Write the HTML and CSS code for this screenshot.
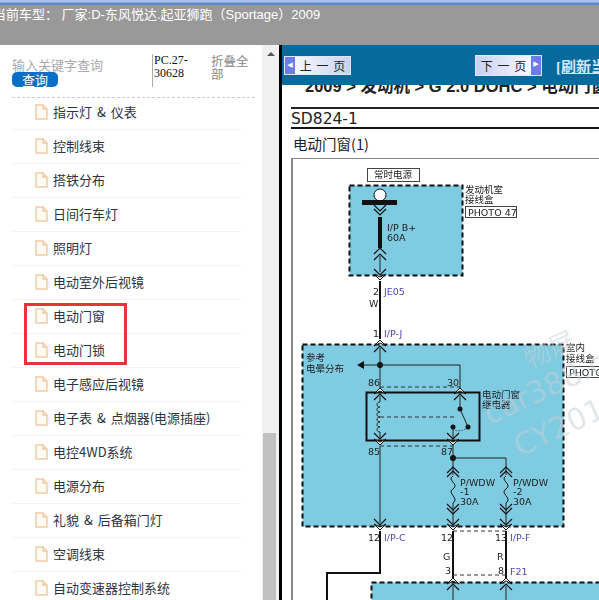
FILE: index.html
```html
<!DOCTYPE html>
<html lang="zh-CN">

<head>
    <meta charset="UTF-8">
    <meta name="viewport" content="width=device-width, initial-scale=1.0">
    <title>电动门窗</title>
    <link rel="stylesheet" href="styles.css">
</head>

<body>
    <svg class="defs">
        <defs>
            <path id="chev-down" d="M-6 -4 L0 2 L6 -4" fill="none" stroke="#111" stroke-width="1.2" />
            <path id="chev-up" d="M-6 4 L0 -2 L6 4" fill="none" stroke="#111" stroke-width="1.2" />
            <path id="plug-down" d="M-6 -4 L0 2 L6 -4 L0 -1 Z" fill="#fff" stroke="#111" stroke-width="1" />
            <path id="plug-up" d="M-6 4 L0 -2 L6 4 L0 1 Z" fill="#fff" stroke="#111" stroke-width="1" />
            <path id="doc" d="M1 1 H8 L12 5 V15 H1 Z M8 1 V5 H12" fill="#fffaf4" stroke="#efcba2" stroke-width="1.4" />
            <path id="fuse" d="M0 0 C-7 4 7 8 0 13 C-7 17 7 22 0 27" fill="none" stroke="#111" stroke-width="1" />
        </defs>
    </svg>

    <header class="top-bar">
        <div class="top-strip"></div>
        <div class="car-info">当前车型： 厂家:D-东风悦达.起亚狮跑（Sportage）2009</div>
    </header>

    <div class="main">
        <aside class="sidebar">
            <div class="search-row">
                <div class="search-col">
                    <div class="search-hint">输入关键字查询</div>
                    <button class="search-btn">查询</button>
                </div>
                <div class="part-no">PC.27-30628</div>
                <div class="collapse-all">折叠全部</div>
            </div>

            <ul class="tree">
                <li><svg class="doc-icon" viewBox="0 0 13 16"><use href="#doc" /></svg>指示灯 &amp; 仪表</li>
                <li><svg class="doc-icon" viewBox="0 0 13 16"><use href="#doc" /></svg>控制线束</li>
                <li><svg class="doc-icon" viewBox="0 0 13 16"><use href="#doc" /></svg>搭铁分布</li>
                <li><svg class="doc-icon" viewBox="0 0 13 16"><use href="#doc" /></svg>日间行车灯</li>
                <li><svg class="doc-icon" viewBox="0 0 13 16"><use href="#doc" /></svg>照明灯</li>
                <li><svg class="doc-icon" viewBox="0 0 13 16"><use href="#doc" /></svg>电动室外后视镜</li>
                <li><svg class="doc-icon" viewBox="0 0 13 16"><use href="#doc" /></svg>电动门窗</li>
                <li><svg class="doc-icon" viewBox="0 0 13 16"><use href="#doc" /></svg>电动门锁</li>
                <li><svg class="doc-icon" viewBox="0 0 13 16"><use href="#doc" /></svg>电子感应后视镜</li>
                <li><svg class="doc-icon" viewBox="0 0 13 16"><use href="#doc" /></svg>电子表 &amp; 点烟器(电源插座)</li>
                <li><svg class="doc-icon" viewBox="0 0 13 16"><use href="#doc" /></svg>电控4WD系统</li>
                <li><svg class="doc-icon" viewBox="0 0 13 16"><use href="#doc" /></svg>电源分布</li>
                <li><svg class="doc-icon" viewBox="0 0 13 16"><use href="#doc" /></svg>礼貌 &amp; 后备箱门灯</li>
                <li><svg class="doc-icon" viewBox="0 0 13 16"><use href="#doc" /></svg>空调线束</li>
                <li><svg class="doc-icon" viewBox="0 0 13 16"><use href="#doc" /></svg>自动变速器控制系统</li>
            </ul>

            <div class="red-mark"></div>
        </aside>

        <div class="scrollbar">
            <div class="scroll-up"></div>
            <div class="scroll-thumb"></div>
        </div>

        <section class="content">
            <div class="nav-band">
                <div class="page-btn page-prev">
                    <span class="page-arrow">◀</span>
                    <span class="page-label">上 一 页</span>
                </div>
                <div class="page-btn page-next">
                    <span class="page-label">下 一 页</span>
                    <span class="page-arrow">▶</span>
                </div>
                <a class="refresh-link">[刷新当前页]</a>
            </div>

            <div class="doc-page">
                <div class="crumbs">2009 &gt; 发动机 &gt; G 2.0 DOHC &gt; 电动门窗</div>
                <div class="doc-code">SD824-1</div>
                <div class="doc-title">电动门窗(1)</div>

                <svg class="diagram" viewBox="293 159 306 441" width="306" height="441">
                    <!-- 接线盒 -->
                    <rect class="box" x="349.5" y="185.5" width="113" height="90" />
                    <rect class="box" x="302.5" y="344.5" width="261" height="182" />
                    <rect class="box" x="371.5" y="582.5" width="240" height="60" />

                    <!-- 常时电源 -->
                    <rect class="tag" x="367.5" y="168.5" width="52" height="13" />
                    <text class="cn" x="393" y="178" text-anchor="middle">常时电源</text>
                    <circle cx="380" cy="195" r="6" fill="#fff" stroke="#111" />
                    <rect x="362" y="200" width="35" height="5" fill="#111" />
                    <use href="#chev-down" x="380" y="209" />
                    <use href="#chev-down" x="380" y="213" />
                    <rect x="378" y="217" width="4" height="31" fill="#111" />
                    <use href="#chev-up" x="380" y="250" />
                    <use href="#chev-up" x="380" y="256" />
                    <line class="wire" x1="380" y1="256" x2="380" y2="272" />
                    <use href="#chev-down" x="380" y="273" />
                    <use href="#plug-down" x="380" y="278" />
                    <text class="lbl" x="387" y="231">I/P B+</text>
                    <text class="lbl" x="387" y="241">60A</text>
                    <text class="cn" x="465" y="193">发动机室</text>
                    <text class="cn" x="465" y="203">接线盒</text>
                    <rect class="tag" x="465.5" y="206.5" width="51" height="11" />
                    <text class="lbl" x="468" y="216">PHOTO 47</text>

                    <line class="wire-thick" x1="380" y1="281" x2="380" y2="339" />
                    <text class="lbl" x="373" y="295">2</text>
                    <text class="code" x="384" y="295">JE05</text>
                    <text class="lbl" x="369" y="307">W</text>
                    <text class="lbl" x="373" y="337">1</text>
                    <text class="code" x="384" y="337">I/P-J</text>
                    <use href="#plug-up" x="380" y="342" />

                    <!-- 继电器 -->
                    <use href="#chev-up" x="380" y="348" />
                    <line class="wire" x1="380" y1="348" x2="380" y2="392" />
                    <circle cx="380" cy="365" r="3" fill="#111" />
                    <path d="M357 365 L364 361 V369 Z" fill="#111" />
                    <path class="wire" d="M364 365 H460 V391" />
                    <text class="cn" x="306" y="361">参考</text>
                    <text class="cn" x="306" y="372">电晕分布</text>
                    <text class="lbl" x="368" y="386">86</text>
                    <text class="lbl" x="447" y="386">30</text>
                    <line class="dash" x1="380" y1="387" x2="460" y2="387" />
                    <rect x="366.5" y="392.5" width="113" height="48" fill="none" stroke="#111" stroke-width="2" />
                    <use href="#plug-up" x="380" y="390" />
                    <use href="#plug-up" x="460" y="390" />
                    <use href="#chev-up" x="380" y="396" />
                    <use href="#chev-up" x="460" y="396" />
                    <path class="wire" d="M460 396 V409 L468 427" />
                    <circle cx="460" cy="409" r="2.5" fill="#111" />
                    <circle cx="468" cy="427" r="2.5" fill="#111" />
                    <circle cx="453" cy="427" r="2.5" fill="#111" />
                    <path d="M453 429 C456 432 463 431 467 428" fill="none" stroke="#111" stroke-dasharray="1 2" />
                    <line class="wire" x1="453" y1="427" x2="453" y2="446" />
                    <line class="wire" x1="380" y1="396" x2="380" y2="402" />
                    <path class="wire" d="M380 402 c-4 0 -4 5 0 5 c-4 0 -4 5 0 5 c-4 0 -4 5 0 5 c-4 0 -4 5 0 5 c-4 0 -4 5 0 5 c-4 0 -4 5 0 5 V438" />
                    <line class="dash" x1="380" y1="417" x2="456" y2="417" />
                    <use href="#chev-down" x="380" y="437" />
                    <use href="#chev-down" x="453" y="437" />
                    <use href="#plug-down" x="380" y="443" />
                    <use href="#plug-down" x="453" y="443" />
                    <line class="dash" x1="380" y1="446" x2="453" y2="446" />
                    <text class="lbl" x="368" y="455">85</text>
                    <text class="lbl" x="441" y="455">87</text>
                    <text class="cn" x="482" y="398">电动门窗</text>
                    <text class="cn" x="482" y="408">继电器</text>
                    <text class="cn" x="566" y="351">室内</text>
                    <text class="cn" x="566" y="362">接线盒</text>
                    <rect class="tag" x="566.5" y="366.5" width="50" height="11" />
                    <text class="lbl" x="569" y="376">PHOTO</text>

                    <!-- 线路和保险丝 -->
                    <line class="wire" x1="380" y1="446" x2="380" y2="523" />
                    <use href="#chev-down" x="380" y="523" />
                    <use href="#plug-down" x="380" y="528" />
                    <line class="wire" x1="453" y1="446" x2="453" y2="475" />
                    <circle cx="453" cy="458" r="3" fill="#111" />
                    <path class="wire" d="M453 458 H506 V475" />
                    <use href="#chev-up" x="453" y="469" />
                    <use href="#chev-up" x="453" y="473" />
                    <use href="#chev-up" x="506" y="469" />
                    <use href="#chev-up" x="506" y="473" />
                    <use href="#fuse" x="453" y="476" />
                    <use href="#fuse" x="506" y="476" />
                    <line class="wire" x1="453" y1="503" x2="453" y2="524" />
                    <line class="wire" x1="506" y1="503" x2="506" y2="524" />
                    <use href="#chev-down" x="453" y="508" />
                    <use href="#chev-down" x="453" y="512" />
                    <use href="#chev-down" x="506" y="508" />
                    <use href="#chev-down" x="506" y="512" />
                    <use href="#chev-down" x="453" y="523" />
                    <use href="#chev-down" x="506" y="523" />
                    <use href="#plug-down" x="453" y="528" />
                    <use href="#plug-down" x="506" y="528" />
                    <text class="lbl" x="460" y="486">P/WDW</text>
                    <text class="lbl" x="460" y="495">-1</text>
                    <text class="lbl" x="460" y="505">30A</text>
                    <text class="lbl" x="513" y="486">P/WDW</text>
                    <text class="lbl" x="513" y="495">-2</text>
                    <text class="lbl" x="513" y="505">30A</text>

                    <path class="wire-thick" d="M380 531 V573 H327 V600" />
                    <line class="wire-thick" x1="453" y1="531" x2="453" y2="580" />
                    <line class="wire-thick" x1="506" y1="531" x2="506" y2="580" />
                    <line class="dash" x1="453" y1="531" x2="506" y2="531" />
                    <line class="dash" x1="453" y1="575" x2="506" y2="575" />
                    <text class="lbl" x="368" y="541">12</text>
                    <text class="code" x="384" y="541">I/P-C</text>
                    <text class="lbl" x="441" y="541">12</text>
                    <text class="lbl" x="495" y="541">13</text>
                    <text class="code" x="510" y="541">I/P-F</text>
                    <text class="lbl" x="443" y="560">G</text>
                    <text class="lbl" x="497" y="560">R</text>
                    <text class="lbl" x="445" y="574">3</text>
                    <text class="lbl" x="498" y="574">8</text>
                    <text class="code" x="510" y="575">F21</text>
                    <use href="#plug-up" x="453" y="580" />
                    <use href="#plug-up" x="506" y="580" />
                    <use href="#chev-up" x="453" y="586" />
                    <use href="#chev-up" x="506" y="586" />
                    <line class="wire" x1="453" y1="586" x2="453" y2="600" />
                    <line class="wire" x1="506" y1="586" x2="506" y2="600" />

                    <!-- 水印 -->
                    <g class="watermark">
                        <text transform="translate(530 369) rotate(-25)" font-size="26">物屏</text>
                        <text transform="translate(490 425) rotate(-25)" font-size="30">car388.c</text>
                        <text transform="translate(520 457) rotate(-25)" font-size="30">CY201</text>
                    </g>
                </svg>
            </div>
        </section>
    </div>
</body>

</html>
```

FILE: styles.css
```css
* {
    box-sizing: border-box;
}

html,
body {
    margin: 0;
    height: 600px;
    overflow: hidden;
}

body {
    font-family: "Noto Sans CJK SC", "Liberation Sans", sans-serif;
    background-color: #fff;
    color: #333;
    display: flex;
    flex-direction: column;
}

.defs {
    width: 0;
    height: 0;
    display: block;
}

.top-bar {
    height: 45px;
    flex: none;
    background-color: #999;
    overflow: hidden;
}

.top-strip {
    height: 5px;
    background: linear-gradient(#a9c2ea 0, #a9c2ea 2px, #5f86cf 3px, #5f86cf 5px);
}

.car-info {
    margin-left: -7px;
    margin-top: 1px;
    color: #fff;
    font-family: "Liberation Sans", "Noto Sans CJK SC", sans-serif;
    font-size: 13px;
    line-height: 17px;
    white-space: nowrap;
}

.main {
    flex: 1;
    display: flex;
    min-height: 0;
}

/* left tree */
.sidebar {
    width: 262px;
    flex: none;
    position: relative;
    overflow: hidden;
}

.search-row {
    height: 53px;
    margin: 0 7px 0 12px;
    padding-top: 9px;
    border-bottom: 1px dashed #ccc;
    display: flex;
}

.search-col {
    width: 140px;
    padding-top: 3px;
}

.search-hint {
    font-size: 13px;
    line-height: 15px;
    color: #aaa;
}

.search-btn {
    display: block;
    width: 46px;
    height: 15px;
    padding: 0;
    border: none;
    border-radius: 5px;
    background-color: #0a6fc8;
    color: #fff;
    font-family: inherit;
    font-size: 13px;
    line-height: 15px;
}

.part-no {
    width: 59px;
    height: 33px;
    padding-left: 1px;
    border-left: 1px solid #aaa;
    font-family: "Liberation Serif", serif;
    font-size: 12px;
    line-height: 13px;
    color: #111;
}

.collapse-all {
    width: 38px;
    font-size: 12.5px;
    line-height: 13px;
    color: #888;
}

.tree {
    list-style: none;
    margin: -2px 0 0 12px;
    padding: 0;
    width: 229px;
}

.tree li {
    height: 34px;
    padding-left: 23px;
    padding-bottom: 2px;
    border-bottom: 1px solid #f3f3f3;
    display: flex;
    align-items: center;
    gap: 5px;
    font-size: 13px;
    word-spacing: 2px;
    color: #2c3440;
    white-space: nowrap;
}

.doc-icon {
    width: 13px;
    height: 16px;
    flex: none;
}

.red-mark {
    position: absolute;
    left: 24px;
    top: 258px;
    width: 103px;
    height: 62px;
    border: 3px solid #e8333a;
}

/* fake scrollbar */
.scrollbar {
    width: 17px;
    flex: none;
    background-color: #f0f0f0;
    display: flex;
    flex-direction: column;
    align-items: center;
}

.scroll-up {
    margin-top: 7px;
    border-left: 4px solid transparent;
    border-right: 4px solid transparent;
    border-bottom: 4px solid #555;
}

.scroll-thumb {
    width: 13px;
    height: 167px;
    margin-top: auto;
    margin-right: 2px;
    background-color: #c0c0c0;
}

/* right side */
.content {
    flex: 1;
    min-width: 0;
    border-left: 3px solid #000;
    overflow: hidden;
}

.nav-band {
    height: 40px;
    position: relative;
    z-index: 1;
    background-color: #066a9c;
    display: flex;
    align-items: center;
    padding-left: 2px;
}

.page-btn {
    flex: none;
    width: 67px;
    height: 19px;
    display: flex;
    align-items: center;
    border: 1px solid #dfe6fb;
    background: linear-gradient(90deg, #fff, #c8d2f2);
    font-size: 12px;
    line-height: 17px;
    word-spacing: 2px;
    color: #222;
    white-space: nowrap;
}

.page-next {
    height: 21px;
    margin-left: 124px;
    background: linear-gradient(90deg, #c8d2f2, #fff);
}

.page-label {
    flex: 1;
    text-align: center;
}

.page-arrow {
    flex: none;
    width: 10px;
    height: 100%;
    background-color: #6a7ee6;
    color: #fff;
    font-family: "DejaVu Sans", sans-serif;
    font-size: 7px;
    text-align: center;
}

.refresh-link {
    flex: none;
    margin-left: 14px;
    color: #cfe6fa;
    font-family: "Liberation Serif", "Noto Sans CJK SC", serif;
    font-size: 15px;
    font-weight: bold;
    text-decoration: underline;
    white-space: nowrap;
}

.doc-page {
    padding-left: 9px;
}

.crumbs {
    height: 32px;
    margin-top: -10px;
    padding-left: 14px;
    color: #222;
    font-family: "Liberation Sans", "Noto Sans CJK SC", sans-serif;
    font-size: 16.5px;
    font-weight: bold;
    line-height: 22px;
    white-space: nowrap;
}

.doc-code {
    height: 22px;
    border-top: 2px solid #222;
    border-bottom: 2px solid #111;
    font-family: "DejaVu Sans", sans-serif;
    font-size: 15.5px;
    line-height: 20px;
    color: #222;
}

.doc-title {
    height: 29px;
    padding-left: 2px;
    font-size: 14.5px;
    line-height: 29px;
    color: #222;
}

.diagram {
    display: block;
    border-top: 1px solid #888;
    border-left: 2px solid #888;
    box-sizing: content-box;
    filter: blur(0.3px);
}

.box {
    fill: #7fcbe2;
    stroke: #111;
    stroke-width: 2;
    stroke-dasharray: 5 3;
}

.tag {
    fill: #fff;
    stroke: #444;
}

.wire {
    fill: none;
    stroke: #222;
    stroke-width: 1;
}

.wire-thick {
    fill: none;
    stroke: #111;
    stroke-width: 2;
}

.dash {
    stroke: #333;
    stroke-width: 1;
    stroke-dasharray: 4 3;
}

.lbl {
    font-family: "DejaVu Sans", sans-serif;
    font-size: 9.5px;
    fill: #222;
}

.code {
    font-family: "DejaVu Sans", sans-serif;
    font-size: 9.5px;
    fill: #4a48b0;
}

.cn {
    font-size: 9.5px;
    fill: #222;
}

.watermark {
    font-family: "DejaVu Sans", sans-serif;
    fill: #c8d0d4;
    opacity: 0.5;
}
```
